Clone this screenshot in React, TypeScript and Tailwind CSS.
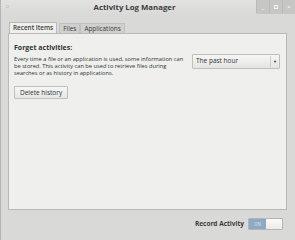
import React from "react";

const font = { fontFamily: '"Open Sans", "Noto Sans", sans-serif' };

function WinButton({ children }: { children: React.ReactNode }) {
  return (
    <div className="w-[13px] h-[14px] flex items-center justify-center bg-[#c6c7c5] border-l border-[#bbbcba] text-[6px] font-bold text-[#f4f4f2] leading-none">
      {children}
    </div>
  );
}

export default function App() {
  return (
    <div
      className="w-[295px] h-[240px] bg-[#d9dad8] flex flex-col border-l border-[#b5b5b3] overflow-hidden text-[#2e3436]"
      style={font}
    >
      {/* barra de título */}
      <div className="relative h-[15px] flex items-center bg-gradient-to-b from-[#e2e3e1] to-[#d9dad8] pl-[15px] pr-[42px]">
        <div className="absolute left-[5px] top-[5px] w-[3px] h-[3px] rounded-[1px] bg-[#efefed] border border-[#c4c4c2]" />
        <span className="flex-1 text-center text-[7.8px] font-bold text-[#3c3c3c] leading-none">Activity Log Manager</span>
        <div className="absolute right-0 top-0 flex rounded-bl-[2px] overflow-hidden">
          <WinButton>_</WinButton>
          <WinButton>
            <div className="w-[4px] h-[4px] border border-[#f4f4f2]" />
          </WinButton>
          <WinButton>×</WinButton>
        </div>
      </div>

      {/* abas */}
      <div className="flex items-end pl-[8px] pt-[7px] text-[6.4px] leading-none">
        <div className="h-[12px] px-[3px] flex items-center bg-[#eff0ed] border border-b-0 border-[#b9bab7] rounded-t-[1px] font-semibold text-[#3a3a3a]">
          Recent Items
        </div>
        <div className="h-[11px] px-[3px] flex items-center bg-[#d0d1cf] border border-b-0 border-[#c0c1be] ml-[2px] text-[#3a3a3a]">
          Files
        </div>
        <div className="h-[11px] px-[3px] flex items-center bg-[#d0d1cf] border border-b-0 border-[#c0c1be] text-[#3a3a3a]">
          Applications
        </div>
      </div>

      {/* painel */}
      <div className="ml-[7px] mr-[8px] h-[177px] bg-[#eff0ed] border border-[#b9bab7] -mt-px px-[5px] pt-[10px]">
        <div className="flex items-start justify-between">
          <div className="w-[172px]">
            <div className="text-[7px] font-bold leading-none text-[#2e3436]">Forget activities:</div>
            <p className="mt-[4.5px] text-[5.7px] leading-[7px] text-[#2e3436]">
              Every time a file or an application is used, some information can be stored. This activity can be used to retrieve files during searches or as history in applications.
            </p>
            <button className="mt-[3px] h-[13px] px-[5px] bg-gradient-to-b from-[#f7f7f6] to-[#e6e7e4] border border-[#bfc0bd] rounded-[1px] text-[6.5px] leading-none text-[#2e3436]">
              Delete history
            </button>
          </div>
          <div className="mt-[10px] mr-[1px] w-[88px] h-[15px] flex items-center bg-gradient-to-b from-[#f6f6f5] to-[#e4e5e2] border border-[#bebfbc] rounded-[1px]">
            <span className="flex-1 pl-[3px] text-[6.5px] leading-none text-[#2e3436]">The past hour</span>
            <div className="w-px h-[11px] bg-[#d0d1ce]" />
            <span className="w-[8px] text-center text-[4px] leading-none text-[#333]">▼</span>
          </div>
        </div>
      </div>

      {/* rodapé */}
      <div className="flex-1 flex items-center justify-end pr-[12px] gap-[4px] pb-[2px]">
        <span className="text-[6.5px] font-bold leading-none text-[#3c3c3c]">Record Activity</span>
        <div className="flex w-[35px] h-[12px] border border-[#b4b5b2] rounded-[1px] overflow-hidden">
          <div className="w-[17px] bg-[#8fa9c4] flex items-center justify-center text-[4.5px] text-[#dfe7ef] leading-none">ON</div>
          <div className="flex-1 bg-gradient-to-b from-[#fbfbfa] to-[#ebecea]" />
        </div>
      </div>
    </div>
  );
}
